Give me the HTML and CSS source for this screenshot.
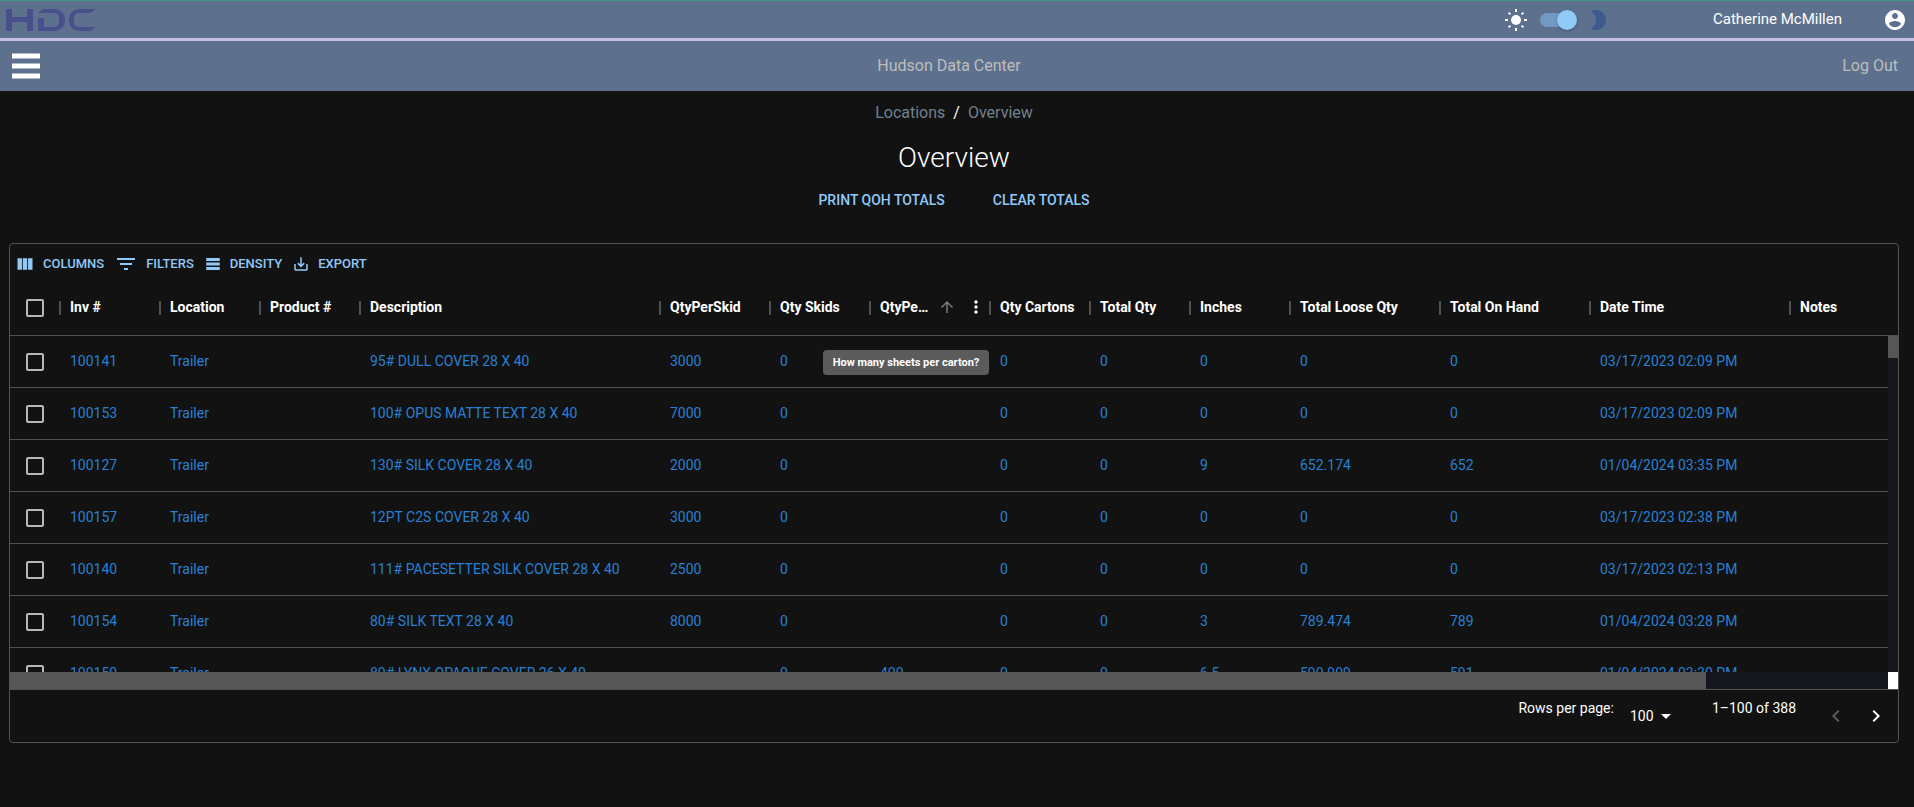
FILE: index.html
```html
<!DOCTYPE html>
<html lang="en">
<head>
<meta charset="utf-8">
<title>Hudson Data Center</title>
<link rel="stylesheet" href="styles.css">
</head>
<body>
<header class="topbar">
  <a class="logo" href="#" aria-label="HDC">
    <svg width="90" height="22" viewBox="0 0 90 22" fill="#484f8b"><path d="M0 0h6v8h15V0h6v22h-6v-9H6v9H0z"/><path d="M37 0h12a10 10 0 0 1 10 10v2a10 10 0 0 1-10 10H32V9h6v9h10a5 5 0 0 0 5-5V9a5 5 0 0 0-5-5H32z"/><path d="M90 0l-6 4H73a5 5 0 0 0-5 5v4a5 5 0 0 0 5 5h17l-6 4H73a10 10 0 0 1-10-10v-2A10 10 0 0 1 73 0z"/></svg>
  </a>
  <div class="theme">
    <svg width="24" height="24" viewBox="0 0 24 24" fill="#fff"><circle cx="12" cy="12" r="5"/><g stroke="#fff" stroke-width="2"><path d="M12 1v3M12 20v3M1 12h3M20 12h3M4.6 4.6l1.8 1.8M17.6 17.6l1.8 1.8M4.6 19.4l1.8-1.8M17.6 6.4l1.8-1.8"/></g></svg>
    <input class="switch" type="checkbox" checked aria-label="Dark theme">
    <svg width="24" height="24" viewBox="0 0 24 24" fill="#3c5a8c"><path d="M10 2c-1.820 0-3.530.5-5 1.350C7.990 5.080 10 8.300 10 12s-2.010 6.920-5 8.650C6.470 21.500 8.180 22 10 22c5.520 0 10-4.480 10-10S15.520 2 10 2z"/></svg>
  </div>
  <span class="user">Catherine McMillen</span>
  <button class="icon-btn" aria-label="Account"><svg width="24" height="24" viewBox="0 0 24 24" fill="#fff"><path d="M12 2C6.480 2 2 6.480 2 12s4.480 10 10 10 10-4.480 10-10S17.520 2 12 2zm0 3c1.660 0 3 1.340 3 3s-1.340 3-3 3-3-1.340-3-3 1.340-3 3-3zm0 14.200c-2.500 0-4.710-1.280-6-3.220.03-1.990 4-3.080 6-3.080 1.990 0 5.970 1.090 6 3.080-1.290 1.940-3.500 3.220-6 3.220z"/></svg></button>
</header>
<nav class="navbar">
  <button class="menu-btn" aria-label="Menu"><svg width="28" height="26" viewBox="0 0 28 26" fill="#fff"><rect y="0.500" width="28" height="5" rx="0.500"/><rect y="10.500" width="28" height="5" rx="0.500"/><rect y="20.500" width="28" height="5" rx="0.500"/></svg></button>
  <a class="brand" href="#">Hudson Data Center</a>
  <a class="logout" href="#">Log Out</a>
</nav>
<main>
  <nav class="crumbs" aria-label="Breadcrumb"><a href="#">Locations</a><span>/</span><a href="#">Overview</a></nav>
  <h1>Overview</h1>
  <div class="actions"><button class="text-btn">PRINT QOH TOTALS</button><button class="text-btn">CLEAR TOTALS</button></div>

  <section class="grid">
    <div class="toolbar">
      <button class="tool"><svg width="20" height="20" viewBox="0 0 24 24"><path d="M14.670 5v14H9.330V5h5.340zm1 14H21V5h-5.330v14zm-7.340 0V5H3v14h5.330z"/></svg>COLUMNS</button>
      <button class="tool"><svg width="24" height="24" viewBox="0 0 24 24"><path d="M10 18h4v-2h-4v2zM3 6v2h18V6H3zm3 7h12v-2H6v2z"/></svg>FILTERS</button>
      <button class="tool"><svg width="18" height="18" viewBox="0 0 24 24"><path d="M21 8H3V4h18v4zm0 2H3v4h18v-4zm0 6H3v4h18v-4z"/></svg>DENSITY</button>
      <button class="tool"><svg width="18" height="18" viewBox="0 0 24 24"><path d="M19 12v7H5v-7H3v7c0 1.100.9 2 2 2h14c1.100 0 2-.9 2-2v-7h-2zm-6 .67l2.590-2.580L17 11.500l-5 5-5-5 1.410-1.410L11 12.670V3h2z"/></svg>EXPORT</button>
    </div>
    <div class="viewport">
      <div class="table-clip">
      <table>
        <colgroup><col class="w50"><col class="w100"><col class="w100"><col class="w100"><col class="w300"><col class="w110"><col class="w100"><col class="w120"><col class="w100"><col class="w100"><col class="w100"><col class="w150"><col class="w150"><col class="w200"><col></colgroup>
        <thead><tr>
          <th class="check"><input type="checkbox" aria-label="Select all rows"></th><th>Inv #</th><th>Location</th><th>Product #</th><th>Description</th><th>QtyPerSkid</th><th>Qty Skids</th>
          <th><div class="sorted"><span class="label">QtyPe…</span><button class="sort" aria-label="Sort"><svg width="18" height="18" viewBox="0 0 24 24" fill="#7d7d7d"><path d="M4 12l1.410 1.410L11 7.830V20h2V7.830l5.580 5.590L20 12l-8-8-8 8z"/></svg></button><button class="more" aria-label="Column menu"><svg width="20" height="20" viewBox="0 0 24 24" fill="#fff"><path d="M12 8c1.100 0 2-.9 2-2s-.9-2-2-2-2 .9-2 2 .9 2 2 2zm0 2c-1.100 0-2 .9-2 2s.9 2 2 2 2-.9 2-2-.9-2-2-2zm0 6c-1.100 0-2 .9-2 2s.9 2 2 2 2-.9 2-2-.9-2-2-2z"/></svg></button><span class="tooltip" role="tooltip">How many sheets per carton?</span></div></th>
          <th>Qty Cartons</th><th>Total Qty</th><th>Inches</th><th>Total Loose Qty</th><th>Total On Hand</th><th>Date Time</th><th>Notes</th>
        </tr></thead>
        <tbody>
          <tr><td class="check"><input type="checkbox" aria-label="Select 100141"></td><td>100141</td><td>Trailer</td><td></td><td>95# DULL COVER 28 X 40</td><td>3000</td><td>0</td><td></td><td>0</td><td>0</td><td>0</td><td>0</td><td>0</td><td>03/17/2023 02:09 PM</td><td></td></tr>
          <tr><td class="check"><input type="checkbox" aria-label="Select 100153"></td><td>100153</td><td>Trailer</td><td></td><td>100# OPUS MATTE TEXT 28 X 40</td><td>7000</td><td>0</td><td></td><td>0</td><td>0</td><td>0</td><td>0</td><td>0</td><td>03/17/2023 02:09 PM</td><td></td></tr>
          <tr><td class="check"><input type="checkbox" aria-label="Select 100127"></td><td>100127</td><td>Trailer</td><td></td><td>130# SILK COVER 28 X 40</td><td>2000</td><td>0</td><td></td><td>0</td><td>0</td><td>9</td><td>652.174</td><td>652</td><td>01/04/2024 03:35 PM</td><td></td></tr>
          <tr><td class="check"><input type="checkbox" aria-label="Select 100157"></td><td>100157</td><td>Trailer</td><td></td><td>12PT C2S COVER 28 X 40</td><td>3000</td><td>0</td><td></td><td>0</td><td>0</td><td>0</td><td>0</td><td>0</td><td>03/17/2023 02:38 PM</td><td></td></tr>
          <tr><td class="check"><input type="checkbox" aria-label="Select 100140"></td><td>100140</td><td>Trailer</td><td></td><td>111# PACESETTER SILK COVER 28 X 40</td><td>2500</td><td>0</td><td></td><td>0</td><td>0</td><td>0</td><td>0</td><td>0</td><td>03/17/2023 02:13 PM</td><td></td></tr>
          <tr><td class="check"><input type="checkbox" aria-label="Select 100154"></td><td>100154</td><td>Trailer</td><td></td><td>80# SILK TEXT 28 X 40</td><td>8000</td><td>0</td><td></td><td>0</td><td>0</td><td>3</td><td>789.474</td><td>789</td><td>01/04/2024 03:28 PM</td><td></td></tr>
          <tr><td class="check"><input type="checkbox" aria-label="Select 100150"></td><td>100150</td><td>Trailer</td><td></td><td>80# LYNX OPAQUE COVER 26 X 40</td><td></td><td>0</td><td>400</td><td>0</td><td>0</td><td>6.5</td><td>590.909</td><td>591</td><td>01/04/2024 03:30 PM</td><td></td></tr>
        </tbody>
      </table>
      </div>
      <div class="vscroll"><div class="vhead"></div><div class="vtrack"><div class="vthumb"></div></div></div>
      <div class="hscroll"><div class="hthumb"></div></div>
      <div class="corner"></div>
    </div>
    <footer class="pager">
      <label for="rows">Rows per page:</label>
      <span class="select"><select id="rows"><option>100</option></select><svg width="24" height="24" viewBox="0 0 24 24" fill="#fff"><path d="M7 10l5 5 5-5z"/></svg></span>
      <span class="range">1–100 of 388</span>
      <button class="page" aria-label="Previous page" disabled><svg width="24" height="24" viewBox="0 0 24 24" fill="#5a5a5a"><path d="M15.410 7.410L14 6l-6 6 6 6 1.410-1.410L10.830 12z"/></svg></button>
      <button class="page" aria-label="Next page"><svg width="24" height="24" viewBox="0 0 24 24" fill="#fff"><path d="M10 6L8.590 7.410 13.170 12l-4.580 4.590L10 18l6-6z"/></svg></button>
    </footer>
  </section>
</main>
</body>
</html>
```

FILE: styles.css
```css
* { box-sizing: border-box; }
body { margin: 0; background: #121212; color: #fff; font-family: Roboto, "Liberation Sans", sans-serif; font-size: 14px; line-height: 20px; }
button { background: none; border: 0; padding: 0; color: inherit; font: inherit; display: flex; align-items: center; justify-content: center; }
a { color: inherit; text-decoration: none; }
svg { display: block; flex: none; }

.topbar { display: flex; align-items: center; height: 41px; padding: 0 7px 0 6px; background: #5d718f; border-top: 1px solid #41997b; border-bottom: 3px solid #c5c0e1; }
.logo { margin-right: auto; }
.theme { display: flex; align-items: center; gap: 10px; margin-right: 103px; }
.switch { appearance: none; position: relative; width: 38px; height: 20px; margin: 0; }
.switch::before { content: ""; position: absolute; inset: 3px 3px 3px 2px; border-radius: 7px; background: #719ac3; }
.switch::after { content: ""; position: absolute; right: -1px; top: 0; width: 20px; height: 20px; border-radius: 50%; background: #90caf9; box-shadow: 0 1px 3px rgba(0, 0, 0, .3); }
.user { margin-right: 41px; padding-bottom: 2px; font-size: 15px; }

.navbar { display: grid; grid-template-columns: 1fr auto 1fr; align-items: center; height: 50px; padding: 0 16px 0 12px; background: #5d718f; color: #bdbdbd; font-size: 16px; }
.menu-btn { justify-self: start; }
.brand { margin-right: 12px; }
.logout { justify-self: end; }

main { padding: 0 15px 0 9px; }
.crumbs { display: flex; justify-content: center; gap: 8px; padding-top: 10px; font-size: 16px; line-height: 24px; color: #708090; }
.crumbs span { color: #fff; }
h1 { margin: 16px 0 0; font-size: 28px; line-height: 34px; font-weight: 300; text-align: center; }
.actions { display: flex; justify-content: center; gap: 32px; margin-top: 7px; }
.text-btn { padding: 6px 8px; line-height: 24px; font-weight: 500; color: #90caf9; }

.grid { margin-top: 25px; border: 1px solid #515151; border-radius: 4px; }
.toolbar { display: flex; padding-top: 4px; color: #90caf9; }
.tool { gap: 8px; padding: 4px 5px; font-size: 13px; line-height: 24px; font-weight: 500; }
.tool svg { fill: #90caf9; }

.viewport { display: grid; grid-template-columns: minmax(0, 1fr) 10px; }
.table-clip { height: 392px; overflow: hidden; }
table { width: 100%; table-layout: fixed; border-collapse: separate; border-spacing: 0; }
.w50 { width: 50px; } .w100 { width: 100px; } .w110 { width: 110px; } .w120 { width: 120px; }
.w150 { width: 150px; } .w200 { width: 200px; } .w300 { width: 300px; }
th, td { padding: 0 10px 2px; border-bottom: 1px solid #515151; text-align: left; white-space: nowrap; }
th { position: relative; height: 56px; font-weight: 700; }
th:not(:last-child)::after { content: ""; position: absolute; right: -1px; top: 21px; width: 2px; height: 14px; background: #515151; }
td { height: 52px; color: #2680d4; }
.check { padding: 0 16px; }
.check input { appearance: none; display: block; width: 18px; height: 18px; margin: 0; border: 2px solid #b8b8b8; border-radius: 2px; }
.sorted { display: flex; align-items: center; }
.label { width: 52px; }
.sort { margin-left: 10px; }
.more { margin-left: 10px; }
.tooltip { position: absolute; left: -47px; top: 70px; width: 166px; padding: 5px 0; border-radius: 4px; background: #5b5b5b; font-size: 11px; line-height: 15px; text-align: center; z-index: 1; }
.vscroll { display: flex; flex-direction: column; }
.vhead { height: 56px; border-bottom: 1px solid #515151; }
.vtrack { flex: 1; background: #16171d; }
.vthumb { height: 22px; background: #565656; }
.hscroll { height: 17px; background: #16171d; }
.hthumb { width: 90.300%; height: 100%; background: #565656; }
.corner { background: #fff; }

.pager { display: flex; align-items: center; height: 53px; padding-right: 10px; border-top: 1px solid #515151; }
.pager label { margin: 0 16px 16px auto; }
.select { position: relative; display: flex; margin-right: 34px; }
.select svg { position: absolute; right: 0; top: 0; pointer-events: none; }
.select select { appearance: none; width: 48px; height: 24px; padding: 0; border: 0; background: none; color: #fff; font: inherit; }
.range { margin: 0 28px 16px 0; }
.page + .page { margin-left: 16px; }
```
